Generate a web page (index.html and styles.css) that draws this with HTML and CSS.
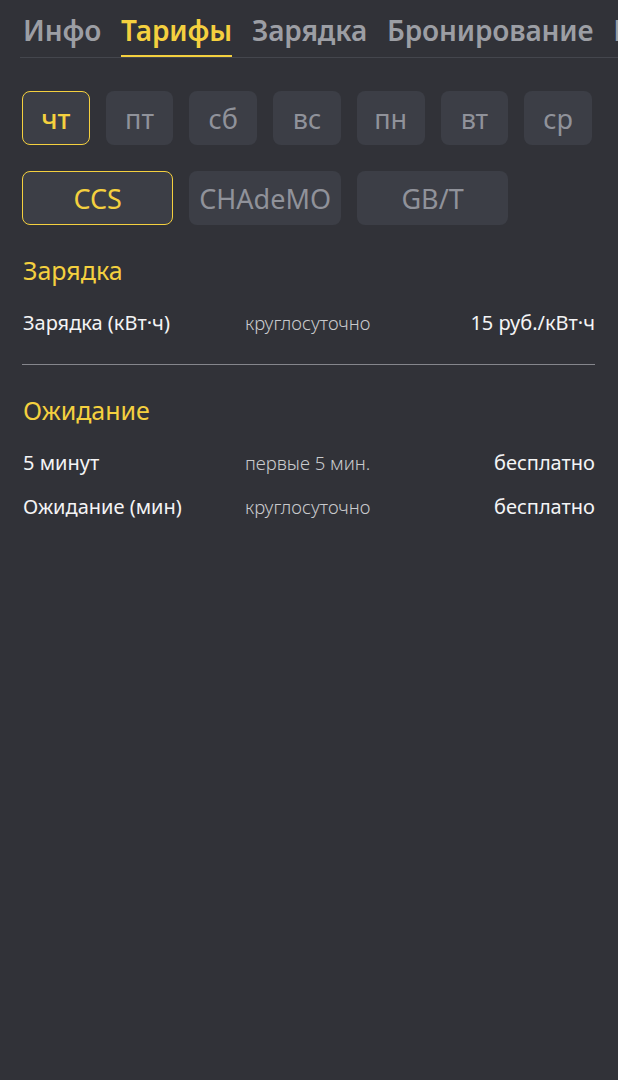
FILE: index.html
```html
<!DOCTYPE html>
<html lang="ru">
<head>
<meta charset="utf-8">
<title>Тарифы</title>
<link rel="stylesheet" href="styles.css">
</head>
<body>
<div class="page">
  <nav class="tabs">
    <span class="tab">Инфо</span>
    <span class="tab active">Тарифы</span>
    <span class="tab">Зарядка</span>
    <span class="tab">Бронирование</span>
    <span class="tab">История</span>
  </nav>
  <main class="content">
    <div class="chips">
      <div class="chip selected">чт</div>
      <div class="chip">пт</div>
      <div class="chip">сб</div>
      <div class="chip">вс</div>
      <div class="chip">пн</div>
      <div class="chip">вт</div>
      <div class="chip">ср</div>
    </div>
    <div class="chips connectors">
      <div class="chip wide selected">CCS</div>
      <div class="chip wide">CHAdeMO</div>
      <div class="chip wide">GB/T</div>
    </div>

    <section class="group">
      <h2 class="group-title">Зарядка</h2>
      <div class="row">
        <span class="name">Зарядка (кВт·ч)</span>
        <span class="period">круглосуточно</span>
        <span class="price">15 руб./кВт·ч</span>
      </div>
    </section>
    <hr class="sep">
    <section class="group">
      <h2 class="group-title">Ожидание</h2>
      <div class="row">
        <span class="name">5 минут</span>
        <span class="period">первые 5 мин.</span>
        <span class="price">бесплатно</span>
      </div>
      <div class="row">
        <span class="name">Ожидание (мин)</span>
        <span class="period">круглосуточно</span>
        <span class="price">бесплатно</span>
      </div>
    </section>
  </main>
</div>
</body>
</html>
```
FILE: styles.css
```css
html, body {
  margin: 0;
  padding: 0;
  background: #313238;
  height: 100%;
}
body {
  font-family: "Noto Sans", "Liberation Sans", sans-serif;
  color: #f2f2f3;
  overflow: hidden;
}
.page {
  width: 618px;
  min-height: 1080px;
  background: #313238;
}
.tabs {
  display: flex;
  gap: 20px;
  margin-left: 20px;
  padding: 0 0 0 3px;
  height: 57px;
  border-bottom: 1px solid #44464d;
  white-space: nowrap;
  overflow: hidden;
}
.tab {
  font-size: 28px;
  font-weight: 600;
  color: #9c9ea4;
  line-height: 1;
  padding-top: 16px;
  height: 41px;
  box-sizing: content-box;
  letter-spacing: -0.15px;
  flex: none;
}
.tab.active {
  color: #f4d03f;
  border-bottom: 2px solid #f4d03f;
  height: 39px;
}
.content {
  padding: 33px 23px 0 22px;
}
.chips {
  display: grid;
  grid-template-columns: repeat(7, 1fr);
  column-gap: 16px;
  width: 570px;
}
.connectors {
  margin-top: 26px;
}
.chip {
  height: 54px;
  box-sizing: border-box;
  border-radius: 8px;
  background: #3c3e46;
  color: #90929a;
  font-size: 27px;
  display: flex;
  align-items: center;
  justify-content: center;
  border: 1px solid transparent;
}
.chip.wide {
  grid-column: span 2;
}
.chip.selected {
  border-color: #f4d03f;
  color: #f4d03f;
  font-weight: 500;
}
.chip.wide.selected {
  font-weight: 400;
}
.group-title {
  margin: 30px 0 0 1px;
  font-size: 25px;
  font-weight: 400;
  color: #f4d03f;
  line-height: 30px;
}
.row {
  display: flex;
  align-items: baseline;
  margin-top: 14px;
  line-height: 30px;
}
.group-title + .row {
  margin-top: 23px;
}
.name {
  width: 222px;
  font-size: 20px;
  color: #f4f4f5;
  padding-left: 1px;
}
.period {
  flex: 1;
  font-size: 18.5px;
  font-weight: 300;
  color: #c9cacd;
}
.price {
  font-size: 20px;
  color: #f4f4f5;
  text-align: right;
}
.sep {
  margin: 26px 0 0 0;
  border: none;
  border-top: 1px solid #85868c;
}
```
